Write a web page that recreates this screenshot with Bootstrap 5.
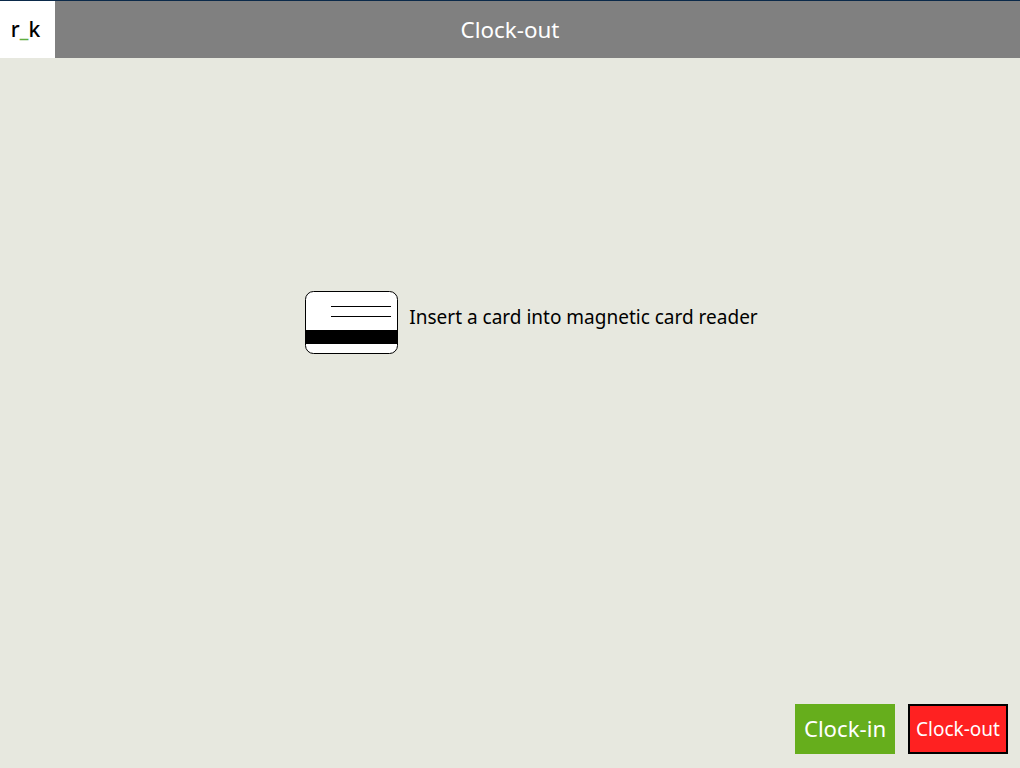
<!DOCTYPE html>
<html lang="en">
<head>
<meta charset="utf-8">
<title>Clock-out</title>
<link href="https://cdn.jsdelivr.net/npm/bootstrap@5.3.0/dist/css/bootstrap.min.css" rel="stylesheet">
<style>
html, body { height: 100%; }
body { background: #e7e8df; font-family: "Noto Sans", "DejaVu Sans", sans-serif; color: #000; overflow: hidden; }
.top-bar { height: 58px; background: #808080; border-top: 1px solid #0b2a4a; }
.logo-box { width: 55px; background: #fff; font-size: 21px; font-weight: 500; padding-right: 4px; }
.logo-us { color: #5fae3f; font-weight: 700; }
.bar-title { color: #fff; font-size: 22.4px; margin-right: 55px; }
.prompt-text { font-size: 19px; margin-left: 11px; padding-bottom: 9px; }
.reader-wrap { margin-bottom: 118px; margin-left: 43px; }
.foot-bar { padding: 0 12px 14px 0; gap: 13px; }
.act-btn { width: 100px; height: 50px; border-radius: 0; color: #fff; padding: 0; line-height: 1; }
.act-btn:hover { color: #fff; }
.act-in { background: #66ae1c; border: 0; font-size: 22.2px; }
.act-out { background: #ff2121; border: 2px solid #000; font-size: 19px; }
</style>
</head>
<body class="d-flex flex-column">
<header class="top-bar d-flex flex-shrink-0">
  <div class="logo-box d-flex align-items-center justify-content-center">r<span class="logo-us">_</span>k</div>
  <div class="bar-title flex-fill d-flex align-items-center justify-content-center">Clock-out</div>
</header>
<main class="flex-fill d-flex align-items-center justify-content-center">
  <div class="reader-wrap d-flex align-items-center">
    <svg width="93" height="63" viewBox="0 0 93 63" aria-hidden="true">
      <rect x=".5" y=".5" width="92" height="62" rx="8" fill="#fff" stroke="#000"/>
      <rect x="0" y="39" width="93" height="14" fill="#000"/>
      <path d="M26 15.5h60M26 25.5h60" stroke="#000" fill="none"/>
    </svg>
    <span class="prompt-text">Insert a card into magnetic card reader</span>
  </div>
</main>
<footer class="foot-bar d-flex justify-content-end flex-shrink-0">
  <button type="button" class="btn act-btn act-in">Clock-in</button>
  <button type="button" class="btn act-btn act-out">Clock-out</button>
</footer>
</body>
</html>
